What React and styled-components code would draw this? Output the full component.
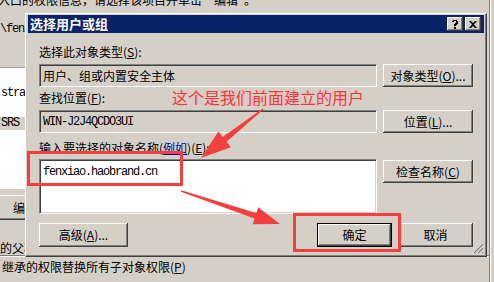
import React from 'react';
import styled, { createGlobalStyle, css } from 'styled-components';

const cjk = `"Noto Sans CJK SC", "Liberation Sans", sans-serif`;
const mono = `"Liberation Mono", "Noto Sans CJK SC", monospace`;

const GlobalStyle = createGlobalStyle`
  html, body {
    margin: 0;
    padding: 0;
  }
  body {
    width: 494px;
    height: 282px;
    overflow: hidden;
    background: #d4d0c8;
    font-family: ${cjk};
    font-size: 12px;
    color: #000;
  }
`;

const Desk = styled.div`
  position: relative;
  width: 494px;
  height: 282px;
  overflow: hidden;
  background: #d4d0c8;
`;

/* ---------- window behind the dialog ---------- */

const BackWindow = styled.div`
  width: 489px;
  height: 282px;
  border-right: 1px solid #808080;
  box-shadow: 1px 0 0 #fff;
  display: flex;
  flex-direction: column;
`;

const BgTop = styled.div`
  height: 13px;
  overflow: hidden;
  flex: none;
`;

const BgTopText = styled.div`
  margin-top: -7px;
  margin-left: -2px;
  line-height: 14px;
  white-space: nowrap;
`;

const BgMiddle = styled.div`
  height: 242px;
  flex: none;
  border-bottom: 1px solid #808080;
  box-shadow: 0 1px 0 #fff;
`;

const LeftStrip = styled.div`
  width: 25px;
  display: flex;
  flex-direction: column;
  white-space: nowrap;
  overflow: hidden;
`;

const PathText = styled.div`
  margin-top: 9px;
  line-height: 14px;
  font-family: ${mono};
  font-size: 12px;
  letter-spacing: -1.2px;
`;

const ListBox = styled.div`
  margin-top: 31px;
  height: 121px;
  background: #fff;
  border-top: 1px solid #a0a0a0;
  display: flex;
  flex-direction: column;
`;

const ListItem = styled.div`
  line-height: 13px;
  height: 13px;
  padding-left: 1px;
  font-family: ${mono};
  font-size: 12px;
  letter-spacing: -1.2px;
  margin-top: ${p => p.$gap}px;
  background: ${p => (p.$selected ? '#d4d0c8' : 'transparent')};
`;

const BgButton = styled.div`
  margin-top: 6px;
  height: 25px;
  box-shadow: inset 0 -1px 0 #404040, inset 0 -2px 0 #808080, inset 0 1px 0 #fff;
  display: flex;
  align-items: center;
  padding-left: 13px;
`;

const BgText = styled.div`
  line-height: 14px;
  margin-top: ${p => p.$top || 0}px;
  padding-left: ${p => p.$left || 0}px;
  white-space: nowrap;
`;

/* ---------- dialog ---------- */

const Dialog = styled.div`
  position: absolute;
  left: 25px;
  top: 13px;
  width: 462px;
  height: 244px;
  box-sizing: border-box;
  background: #d4d0c8;
  border-top: 1px solid #fff;
  border-left: 1px solid #fff;
  border-right: 1px solid #404040;
  border-bottom: 1px solid #404040;
  box-shadow: inset -1px -1px 0 #808080, inset 1px 1px 0 #d4d0c8;
  padding: 1px 2px 0 2px;
  display: flex;
  flex-direction: column;
`;

const TitleBar = styled.div`
  height: 18px;
  flex: none;
  background: #0a246a;
  display: flex;
  align-items: center;
  justify-content: space-between;
  padding: 0 3px 0 2px;
`;

const TitleText = styled.div`
  color: #fff;
  font-weight: bold;
  font-size: 13px;
  line-height: 18px;
`;

const TitleButtons = styled.div`
  display: flex;
  gap: 2px;
`;

const CapButton = styled.div`
  width: 16px;
  height: 14px;
  box-sizing: border-box;
  background: #d4d0c8;
  box-shadow: inset -1px -1px 0 #404040, inset 1px 1px 0 #fff, inset -2px -2px 0 #808080;
  display: flex;
  align-items: center;
  justify-content: center;
`;

const Body = styled.div`
  padding: 12px 11px 0 11px;
  display: flex;
  flex-direction: column;
`;

const Label = styled.div`
  line-height: 14px;
  height: 14px;
  margin-top: ${p => p.$top || 0}px;
  margin-bottom: ${p => p.$bottom || 0}px;
  white-space: nowrap;
`;

const Key = styled.span`
  text-decoration: underline;
  text-underline-offset: 1px;
`;

const Example = styled.span`
  color: #0000a8;
  text-decoration: underline;
  text-underline-offset: 1px;
`;

const Row = styled.div`
  display: flex;
  gap: 6px;
  align-items: flex-start;
`;

const Field = styled.div`
  width: 338px;
  height: ${p => p.$h || 23}px;
  box-sizing: border-box;
  background: ${p => (p.$white ? '#fff' : '#d4d0c8')};
  border-top: 1px solid #808080;
  border-left: 1px solid #808080;
  border-right: 1px solid #fff;
  border-bottom: 1px solid #fff;
  box-shadow: inset 1px 1px 0 #404040, inset -1px -1px 0 #d4d0c8;
  padding: ${p => (p.$white ? '5px' : '0')} 3px 0 3px;
  display: flex;
  align-items: ${p => (p.$white ? 'flex-start' : 'center')};
  white-space: nowrap;
  overflow: hidden;
`;

const MonoText = styled.span`
  font-family: ${mono};
  font-size: 12px;
  letter-spacing: -1.2px;
  line-height: 14px;
`;

const Button = styled.div`
  width: ${p => p.$w || 90}px;
  height: ${p => p.$h || 23}px;
  margin-top: ${p => p.$top || 0}px;
  flex: none;
  box-sizing: border-box;
  background: #d4d0c8;
  display: flex;
  align-items: center;
  justify-content: center;
  white-space: nowrap;
  line-height: 14px;
  ${p =>
    p.$default
      ? css`
          border: 1px solid #000;
          box-shadow: inset -1px -1px 0 #404040, inset 1px 1px 0 #fff, inset -2px -2px 0 #808080;
        `
      : css`
          box-shadow: inset -1px -1px 0 #404040, inset 1px 1px 0 #fff, inset -2px -2px 0 #808080;
        `}
`;

const Footer = styled.div`
  margin-top: 9px;
  display: flex;
  align-items: center;
  gap: 6px;
`;

const Spacer = styled.div`
  flex: 1;
`;

const Grip = styled.svg`
  position: absolute;
  right: 2px;
  bottom: 2px;
`;

/* ---------- annotations ---------- */

const Overlay = styled.svg`
  position: absolute;
  left: 0;
  top: 0;
  pointer-events: none;
`;

const Note = styled.div`
  position: absolute;
  left: 172px;
  top: 88px;
  color: #ff3434;
  font-size: 16px;
  line-height: 18px;
  white-space: nowrap;
`;

const red = '#f43f3f';

export default function App() {
  return (
    <Desk>
      <GlobalStyle />
      <BackWindow>
        <BgTop>
          <BgTopText>入口的权限信息，请选择该项目并单击“编辑”。</BgTopText>
        </BgTop>
        <BgMiddle>
          <LeftStrip>
            <PathText>\fenxiao</PathText>
            <ListBox>
              <ListItem $gap={19}>strator</ListItem>
              <ListItem $gap={17} $selected>SRS</ListItem>
            </ListBox>
            <BgButton>编</BgButton>
            <BgText $top={21}>的父项</BgText>
          </LeftStrip>
        </BgMiddle>
        <BgText $top={4} $left={2}>
          继承的权限替换所有子对象权限(<Key>P</Key>)
        </BgText>
      </BackWindow>

      <Dialog>
        <TitleBar>
          <TitleText>选择用户或组</TitleText>
          <TitleButtons>
            <CapButton>
              <svg width="8" height="9" viewBox="0 0 8 9">
                <path d="M1 1h1V0h4v1h1v3H6v1H5v1H3V4h1V3h1V1H3v1H1z M3 7h2v2H3z" fill="#000" />
              </svg>
            </CapButton>
            <CapButton>
              <svg width="8" height="7" viewBox="0 0 8 7">
                <path d="M0 0h2l2 2 2-2h2L5 3.5 8 7H6L4 5 2 7H0l3-3.5z" fill="#000" />
              </svg>
            </CapButton>
          </TitleButtons>
        </TitleBar>

        <Body>
          <Label $bottom={5}>
            选择此对象类型(<Key>S</Key>):
          </Label>
          <Row>
            <Field>用户、组或内置安全主体</Field>
            <Button>
              对象类型(<Key>O</Key>)...
            </Button>
          </Row>

          <Label $top={4} $bottom={5}>
            查找位置(<Key>F</Key>):
          </Label>
          <Row>
            <Field>
              <MonoText>WIN-J2J4QCDO3UI</MonoText>
            </Field>
            <Button>
              位置(<Key>L</Key>)...
            </Button>
          </Row>

          <Label $top={8} $bottom={4}>
            输入要选择的对象名称(<Example>例如</Example>)(<Key>E</Key>):
          </Label>
          <Row>
            <Field $white $h={55}>
              <MonoText>fenxiao.haobrand.cn</MonoText>
            </Field>
            <Button $top={1}>
              检查名称(<Key>C</Key>)
            </Button>
          </Row>

          <Footer>
            <Button $w={89} $h={24}>
              高级(<Key>A</Key>)...
            </Button>
            <Spacer />
            <Button $w={75} $h={24} $default>
              确定
            </Button>
            <Button $w={75} $h={24}>
              取消
            </Button>
          </Footer>
        </Body>

        <Grip width="12" height="12" viewBox="0 0 12 12">
          <path d="M11 1L1 11M11 5L5 11M11 9L9 11" stroke="#fff" strokeWidth="1" />
          <path d="M11 2L2 11M11 6L6 11M11 10L10 11" stroke="#808080" strokeWidth="1.2" />
        </Grip>
      </Dialog>

      <Note>这个是我们前面建立的用户</Note>
      <Overlay width="494" height="282" viewBox="0 0 494 282">
        <rect x="28.5" y="152.5" width="153" height="32" fill="none" stroke={red} strokeWidth="3" />
        <rect x="294.5" y="214.5" width="105" height="36" fill="none" stroke={red} strokeWidth="3" />
        <polygon
          points="263.4,109.5 226.5,141.8 230.8,147.3 201,158 218.4,131.6 222.7,137 262.6,108.5"
          fill={red}
        />
        <polygon
          points="181.2,190.3 256.3,213 258.2,207.3 280,224 252.6,224.3 254.5,218.6 180.8,191.7"
          fill={red}
        />
      </Overlay>
    </Desk>
  );
}
